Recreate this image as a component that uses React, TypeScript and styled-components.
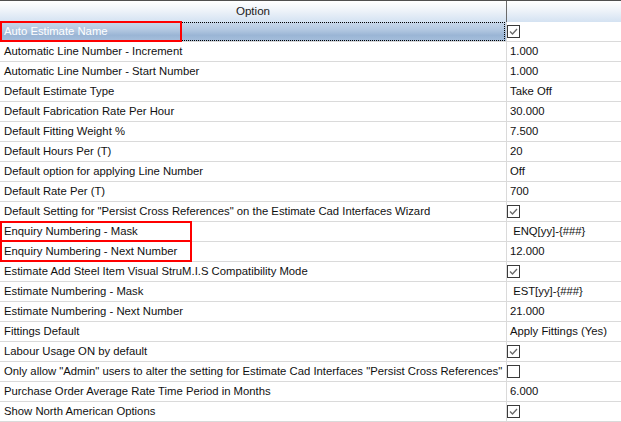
import React from "react"
import styled, { createGlobalStyle } from "styled-components"

type Row = {
    name: string
    value?: string
    check?: boolean
}

const rows: Row[] = [
    { name: "Auto Estimate Name", check: true },
    { name: "Automatic Line Number - Increment", value: "1.000" },
    { name: "Automatic Line Number - Start Number", value: "1.000" },
    { name: "Default Estimate Type", value: "Take Off" },
    { name: "Default Fabrication Rate Per Hour", value: "30.000" },
    { name: "Default Fitting Weight %", value: "7.500" },
    { name: "Default Hours Per (T)", value: "20" },
    { name: "Default option for applying Line Number", value: "Off" },
    { name: "Default Rate Per (T)", value: "700" },
    { name: "Default Setting for \"Persist Cross References\" on the Estimate Cad Interfaces Wizard", check: true },
    { name: "Enquiry Numbering - Mask", value: " ENQ[yy]-{###}" },
    { name: "Enquiry Numbering - Next Number", value: "12.000" },
    { name: "Estimate Add Steel Item Visual StruM.I.S Compatibility Mode", check: true },
    { name: "Estimate Numbering - Mask", value: " EST[yy]-{###}" },
    { name: "Estimate Numbering - Next Number", value: "21.000" },
    { name: "Fittings Default", value: "Apply Fittings (Yes)" },
    { name: "Labour Usage ON by default", check: true },
    { name: "Only allow \"Admin\" users to alter the setting for Estimate Cad Interfaces \"Persist Cross References\"", check: false },
    { name: "Purchase Order Average Rate Time Period in Months", value: "6.000" },
    { name: "Show North American Options", check: true },
]

const App = () => {
    return (
        <>
            <Global />
            <Grid>
                <Header>
                    <HeadCell>Option</HeadCell>
                    <HeadCell $last />
                </Header>
                {rows.map((r, i) => (
                    <Line key={i}>
                        <NameCell $selected={i === 0}>
                            {i === 0 && <Focus />}
                            <span>{r.name}</span>
                        </NameCell>
                        <ValueCell>
                            {r.value !== undefined ? (
                                <span>{r.value}</span>
                            ) : (
                                <Box>
                                    {r.check && (
                                        <svg width="11" height="11" viewBox="0 0 11 11">
                                            <polyline points="2,5.5 4.5,8 9,3" fill="none" stroke="#6a6a6a" strokeWidth="1.3" />
                                        </svg>
                                    )}
                                </Box>
                            )}
                        </ValueCell>
                    </Line>
                ))}
                {/* red annotation boxes drawn over the grid */}
                <Mark $top={21} $width={182} $height={21} />
                <Mark $top={221} $width={192} $height={21} />
                <Mark $top={240} $width={192} $height={22} />
            </Grid>
        </>
    )
}

export default App

const Global = createGlobalStyle`
body {
margin: 0;
background: #ffffff;
font-family: "Liberation Sans", Arial, sans-serif;
font-size: 11.3px;
color: #111111;
overflow: hidden;
}`

const Grid = styled.div`
position: relative;
width: 621px;
height: 422px;
overflow: hidden;`

const Header = styled.div`
display: grid;
grid-template-columns: 507px 1fr;
height: 21px;
border-top: 1px solid #4f4f4f;
background: linear-gradient(#ffffff 0%, #eef3f9 45%, #d4e2f2 100%);`

const HeadCell = styled.div<{ $last?: boolean }>`
display: flex;
align-items: center;
justify-content: center;
color: #1a1a1a;
font-size: 11.6px;
border-right: ${p => p.$last ? "none" : "1px solid #6b6b6b"};
padding-bottom: 3px;`

const Line = styled.div`
display: grid;
grid-template-columns: 507px 1fr;
height: 20px;
box-sizing: border-box;
border-bottom: 1px solid #dadada;`

const NameCell = styled.div<{ $selected?: boolean }>`
position: relative;
display: flex;
align-items: center;
padding-left: 4px;
padding-bottom: 1px;
white-space: nowrap;
overflow: hidden;
border-right: 1px solid #dadada;
color: ${p => p.$selected ? "#ffffff" : "#111111"};
background: ${p => p.$selected ? "linear-gradient(#c9d8ea 0%, #b3c8e1 40%, #9ab5d5 70%, #a6bfdc 100%)" : "transparent"};`

const Focus = styled.div`
position: absolute;
left: 0;
top: 0;
right: 1px;
bottom: 0;
border: 1px dotted #000000;`

const ValueCell = styled.div`
display: flex;
align-items: center;
padding-left: 3px;
padding-bottom: 1px;
white-space: pre;
overflow: hidden;`

const Box = styled.div`
width: 13px;
height: 13px;
box-sizing: border-box;
margin-left: -3px;
border: 1px solid #3a3a3a;
background: #ffffff;
display: flex;
align-items: center;
justify-content: center;`

const Mark = styled.div<{ $top: number; $width: number; $height: number }>`
position: absolute;
left: 0;
top: ${p => p.$top}px;
width: ${p => p.$width}px;
height: ${p => p.$height}px;
box-sizing: border-box;
border: 2px solid #ff0000;`
